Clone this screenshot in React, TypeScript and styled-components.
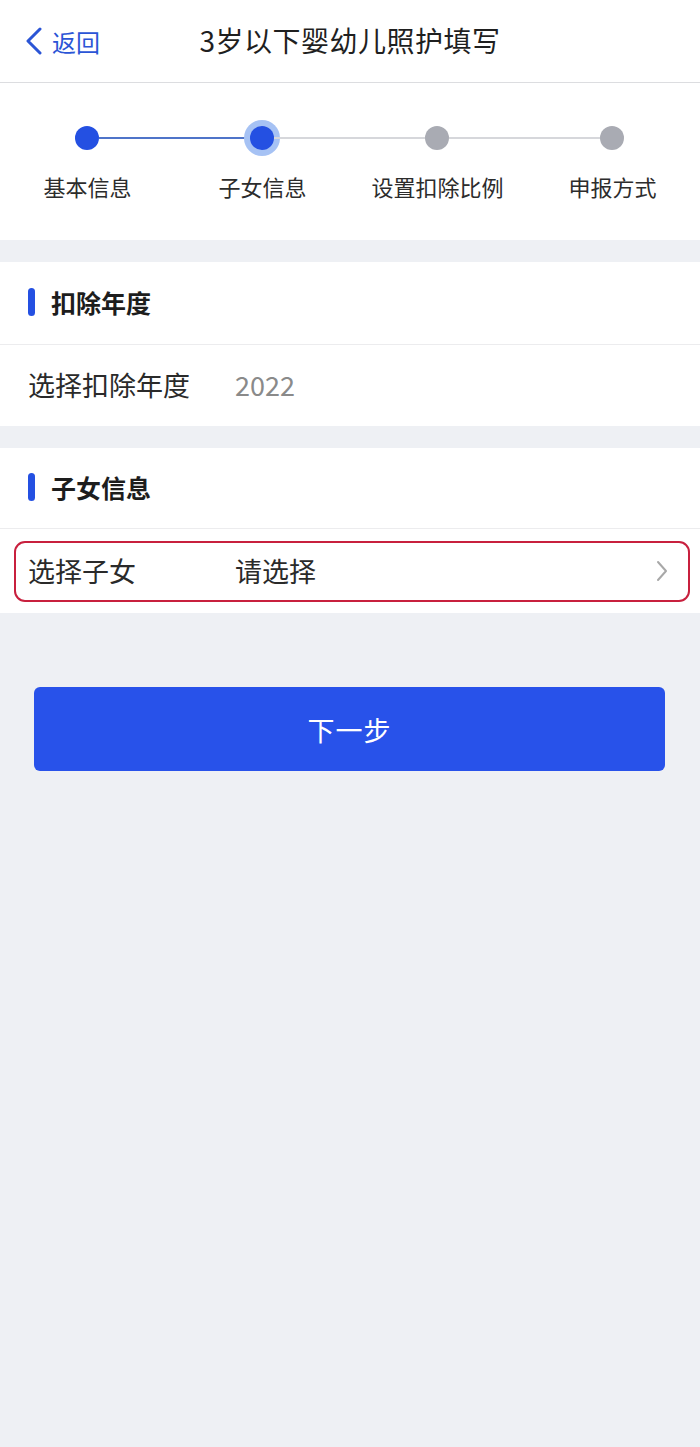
import React from "react";
import styled, { createGlobalStyle } from "styled-components";

const Global = createGlobalStyle`
  html, body { margin: 0; padding: 0; background: #eef0f4; }
  body { font-family: "Noto Sans CJK SC", "Noto Sans", sans-serif; }
  #root { min-height: 1447px; background: #eef0f4; }
`;

const Page = styled.div`
  width: 700px;
  min-height: 1447px;
  background: #eef0f4;
  display: flex;
  flex-direction: column;
`;

const Header = styled.header`
  height: 82px;
  background: #fff;
  border-bottom: 1px solid #dcdde0;
  display: grid;
  grid-template-columns: 1fr auto 1fr;
  align-items: center;
`;

const Back = styled.div`
  display: flex;
  align-items: center;
  gap: 8px;
  padding-left: 24px;
  color: #2b55d6;
  font-size: 24px;
`;

const Title = styled.h1`
  margin: 0;
  font-size: 28px;
  font-weight: 400;
  color: #1f1f1f;
  letter-spacing: 0.5px;
  padding-bottom: 2px;
`;

const StepsCard = styled.section`
  background: #fff;
  height: 157px;
  display: flex;
  flex-direction: column;
  padding-top: 43px;
  box-sizing: border-box;
`;

const Track = styled.div`
  display: flex;
  align-items: center;
  padding: 0 76px 0 75px;
  height: 24px;
`;

const Dot = styled.div<{ $state: "done" | "active" | "todo" }>`
  flex: none;
  width: 24px;
  height: 24px;
  border-radius: 50%;
  box-sizing: border-box;
  background: ${(p) => (p.$state === "todo" ? "#a9abb3" : "#2450e2")};
  box-shadow: ${(p) => (p.$state === "active" ? "0 0 0 6px #a6c2f4" : "none")};
`;

const Line = styled.div<{ $on: boolean }>`
  flex: 1;
  height: 2px;
  background: ${(p) => (p.$on ? "#4f74c9" : "#d6d7db")};
`;

const Labels = styled.div`
  display: grid;
  grid-template-columns: repeat(4, 1fr);
  margin-top: 25px;
`;

const Label = styled.div`
  text-align: center;
  font-size: 22px;
  color: #2c2c2c;
  line-height: 1;
`;

const Card = styled.section`
  background: #fff;
  margin-top: 22px;
  display: flex;
  flex-direction: column;
`;

const SectionHead = styled.div<{ $h: number }>`
  height: ${(p) => p.$h}px;
  display: flex;
  align-items: center;
  gap: 16px;
  padding-left: 28px;
  border-bottom: 1px solid #ececee;
  font-size: 25px;
  font-weight: 700;
  color: #1d1d1d;
  box-sizing: border-box;
  padding-bottom: 3px;
`;

const Bar = styled.span`
  width: 7px;
  height: 28px;
  border-radius: 4px;
  background: #2450e2;
`;

const Row = styled.div`
  height: 81px;
  display: flex;
  align-items: center;
  padding-left: 28px;
  padding-bottom: 3px;
  box-sizing: border-box;
  font-size: 27px;
  color: #2a2a2a;
`;

const RowWrap = styled.div`
  height: 84px;
  padding: 12px 10px 11px 14px;
  box-sizing: border-box;
  display: flex;
`;

const Highlight = styled.div`
  flex: 1;
  border: 2px solid #c8203e;
  border-radius: 11px;
  display: flex;
  align-items: center;
  padding: 0 20px 2px 12px;
  font-size: 27px;
  color: #2a2a2a;
`;

const Key = styled.span<{ $w: number }>`
  width: ${(p) => p.$w}px;
  flex: none;
`;

const Value = styled.span<{ $muted?: boolean }>`
  flex: 1;
  color: ${(p) => (p.$muted ? "#8a8a8a" : "#2a2a2a")};
`;

const NextButton = styled.button`
  margin: 74px 35px 0 34px;
  height: 84px;
  border: none;
  border-radius: 6px;
  background: #2852ea;
  color: #fff;
  font-family: "Noto Sans CJK SC", "Noto Sans", sans-serif;
  font-size: 27px;
  letter-spacing: 1px;
`;

export default function App() {
  return (
    <Page>
      <Global />
      <Header>
        <Back>
          <svg width="20" height="28" viewBox="0 0 20 28">
            <path d="M16 2 L4 14 L16 26" fill="none" stroke="#2b55d6" strokeWidth="3" strokeLinecap="round" strokeLinejoin="round" />
          </svg>
          <span>返回</span>
        </Back>
        <Title>3岁以下婴幼儿照护填写</Title>
        <div />
      </Header>
      <StepsCard>
        <Track>
          <Dot $state="done" />
          <Line $on />
          <Dot $state="active" />
          <Line $on={false} />
          <Dot $state="todo" />
          <Line $on={false} />
          <Dot $state="todo" />
        </Track>
        <Labels>
          <Label>基本信息</Label>
          <Label>子女信息</Label>
          <Label>设置扣除比例</Label>
          <Label>申报方式</Label>
        </Labels>
      </StepsCard>
      <Card>
        <SectionHead $h={83}>
          <Bar />
          扣除年度
        </SectionHead>
        <Row>
          <Key $w={207}>选择扣除年度</Key>
          <Value $muted>2022</Value>
        </Row>
      </Card>
      <Card>
        <SectionHead $h={81}>
          <Bar />
          子女信息
        </SectionHead>
        <RowWrap>
          <Highlight>
            <Key $w={207}>选择子女</Key>
            <Value>请选择</Value>
            <svg width="12" height="22" viewBox="0 0 12 22">
              <path d="M2 2 L10 11 L2 20" fill="none" stroke="#a8a8a8" strokeWidth="2" strokeLinecap="round" strokeLinejoin="round" />
            </svg>
          </Highlight>
        </RowWrap>
      </Card>
      <NextButton>下一步</NextButton>
    </Page>
  );
}
